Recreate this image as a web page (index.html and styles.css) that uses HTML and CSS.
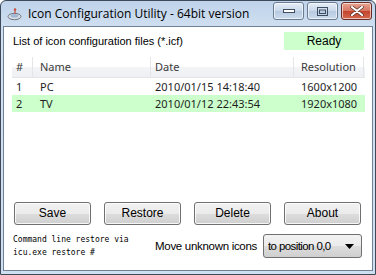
FILE: index.html
```html
<html lang="en">
	<head>
		<meta charset="UTF-8" />
		<title>Icon Configuration Utility - 64bit version</title>
		<link rel="stylesheet" href="styles.css">
	</head>
	<body>
		<div class="window">
			<div class="titlebar">
				<svg class="app-icon" width="15" height="14" viewBox="0 0 15 14">
					<ellipse cx="7.5" cy="9.5" rx="6.5" ry="3.2" fill="#d9dde3" stroke="#6f7885" stroke-width="1" />
					<ellipse cx="7.5" cy="8.8" rx="4" ry="1.8" fill="#9fb8d6" />
					<line x1="8" y1="2" x2="8" y2="7" stroke="#c8503c" stroke-width="1.2" />
					<circle cx="8" cy="2.5" r="1.2" fill="#c8503c" />
				</svg>
				<div class="title">Icon Configuration Utility - 64bit version</div>
				<div class="caption-buttons">
					<div class="cap-btn">
						<svg width="12" height="6" viewBox="0 0 12 6"><rect x="0.5" y="1.5" width="11" height="3" fill="#fff" stroke="#3f4d60" /></svg>
					</div>
					<div class="cap-btn">
						<svg width="11" height="9" viewBox="0 0 11 9"><rect x="0.5" y="0.5" width="10" height="8" fill="none" stroke="#3f4d60" /><rect x="2.5" y="3" width="6" height="3.5" fill="none" stroke="#3f4d60" /></svg>
					</div>
					<div class="cap-btn close">
						<svg width="14" height="10" viewBox="0 0 14 10"><path d="M2 1 L12 9 M12 1 L2 9" stroke="#4b2a24" stroke-width="3.4" stroke-linecap="round" /><path d="M2 1 L12 9 M12 1 L2 9" stroke="#fff" stroke-width="2.2" stroke-linecap="round" /></svg>
					</div>
				</div>
			</div>

			<div class="client">
				<div class="top-row">
					<span>List of icon configuration files (*.icf)</span>
					<div class="status">Ready</div>
				</div>

				<div class="list">
					<div class="row header">
						<div class="c-num">#</div>
						<div class="c-name">Name</div>
						<div class="c-date">Date</div>
						<div class="c-res">Resolution</div>
					</div>
					<div class="row">
						<div class="c-num">1</div>
						<div class="c-name">PC</div>
						<div class="c-date">2010/01/15 14:18:40</div>
						<div class="c-res">1600x1200</div>
					</div>
					<div class="row selected">
						<div class="c-num">2</div>
						<div class="c-name">TV</div>
						<div class="c-date">2010/01/12 22:43:54</div>
						<div class="c-res">1920x1080</div>
					</div>
				</div>

				<div class="buttons">
					<div class="button">Save</div>
					<div class="button">Restore</div>
					<div class="button">Delete</div>
					<div class="button">About</div>
				</div>

				<div class="bottom-row">
					<div class="cmd-hint">Command line restore via<br />icu.exe restore #</div>
					<div class="move-label">Move unknown icons</div>
					<div class="combo">
						<span>to position 0,0</span>
						<svg width="9" height="5" viewBox="0 0 9 5"><path d="M0 0 L9 0 L4.5 5 Z" fill="#000" /></svg>
					</div>
				</div>
			</div>
		</div>
	</body>
</html>
```

FILE: styles.css
```css
* {
	margin: 0;
	padding: 0;
	box-sizing: border-box;
}
body {
	width: 376px;
	height: 275px;
	overflow: hidden;
	font-family: "Liberation Sans", Arial, sans-serif;
	font-size: 11px;
	color: #000;
	background: #fff;
}

.window {
	width: 376px;
	height: 275px;
	display: flex;
	flex-direction: column;
	border: 1px solid #3d4a5a;
	border-radius: 6px 6px 0 0;
	background: linear-gradient(#bfd3ea, #d2e1f1 30px, #cfdff0);
	padding: 0 2px 3px 2px;
}

.titlebar {
	height: 25px;
	display: flex;
	align-items: center;
	padding-left: 4px;
}
.app-icon {
	margin-right: 6px;
}
.title {
	flex: 1;
	font-family: "Open Sans", "Noto Sans", sans-serif;
	font-size: 12px;
	color: #000;
	margin-top: -1px;
}
.caption-buttons {
	display: flex;
	gap: 3px;
	align-self: flex-start;
	margin-top: 1px;
	margin-right: 1px;
}
.cap-btn {
	width: 31px;
	height: 18px;
	border: 1px solid #6b7c92;
	border-radius: 3px;
	background: linear-gradient(#e6eef8, #c9d8ea 50%, #b6c9e0 51%, #cddcee);
	display: flex;
	align-items: center;
	justify-content: center;
	box-shadow: inset 0 0 0 1px rgba(255, 255, 255, 0.6);
}
.cap-btn.close {
	border-color: #6a2b22;
	background: linear-gradient(#e8a593, #d67561 50%, #c4432c 51%, #d26a50);
}

.client {
	flex: 1;
	background: #fff;
	border: 1px solid #6f8196;
	display: flex;
	flex-direction: column;
	padding: 5px 8px 0 9px;
}

.top-row {
	height: 18px;
	display: flex;
	align-items: center;
	justify-content: space-between;
	font-size: 12px;
}
.top-row span {
	font-size: 11px;
}
.status {
	width: 80px;
	height: 18px;
	background: #ccffcc;
	text-align: center;
	line-height: 18px;
}

.list {
	height: 139px;
	margin: 7px -1px 0 -1px;
	font-family: "Noto Sans", sans-serif;
	font-size: 11px;
	color: #1e1e1e;
}
.row {
	display: flex;
	height: 17px;
	align-items: center;
}
.row div {
	padding-left: 4px;
}
.row.header {
	height: 21px;
	background: linear-gradient(#fff, #fff 50%, #f3f4f6 51%, #eef0f3);
	border-bottom: 1px solid #e3e5e8;
	color: #3a3a3a;
}
.row.header div {
	border-right: 1px solid #e3e5e8;
	height: 21px;
	line-height: 20px;
}
.row.selected {
	background: #ccffcc;
}
.c-num {
	width: 21px;
}
.c-name {
	width: 118px;
	padding-left: 7px !important;
}
.c-date {
	width: 143px;
}
.c-res {
	width: 70px;
	padding-left: 7px !important;
}

.buttons {
	display: grid;
	grid-template-columns: repeat(4, 77px);
	gap: 13px;
	margin-top: 6px;
	padding-left: 1px;
	font-size: 12px;
}
.button {
	height: 23px;
	border: 1px solid #707070;
	border-radius: 3px;
	background: linear-gradient(#f2f2f2, #ebebeb 50%, #dddddd 51%, #cfcfcf);
	box-shadow: inset 0 0 0 1px rgba(255, 255, 255, 0.8);
	text-align: center;
	line-height: 21px;
}

.bottom-row {
	display: flex;
	align-items: center;
	margin-top: 8px;
	font-size: 11.5px;
}
.cmd-hint {
	width: 142px;
	font-family: "DejaVu Sans Mono", monospace;
	font-size: 8px;
	line-height: 13px;
}
.move-label {
	width: 108px;
	white-space: nowrap;
	letter-spacing: -0.3px;
}
.combo {
	width: 99px;
	height: 24px;
	border: 1px solid #707070;
	border-radius: 3px;
	background: linear-gradient(#f2f2f2, #ebebeb 50%, #dddddd 51%, #cfcfcf);
	display: flex;
	align-items: center;
	justify-content: space-between;
	padding: 0 7px 0 4px;
	letter-spacing: -0.6px;
}
```
